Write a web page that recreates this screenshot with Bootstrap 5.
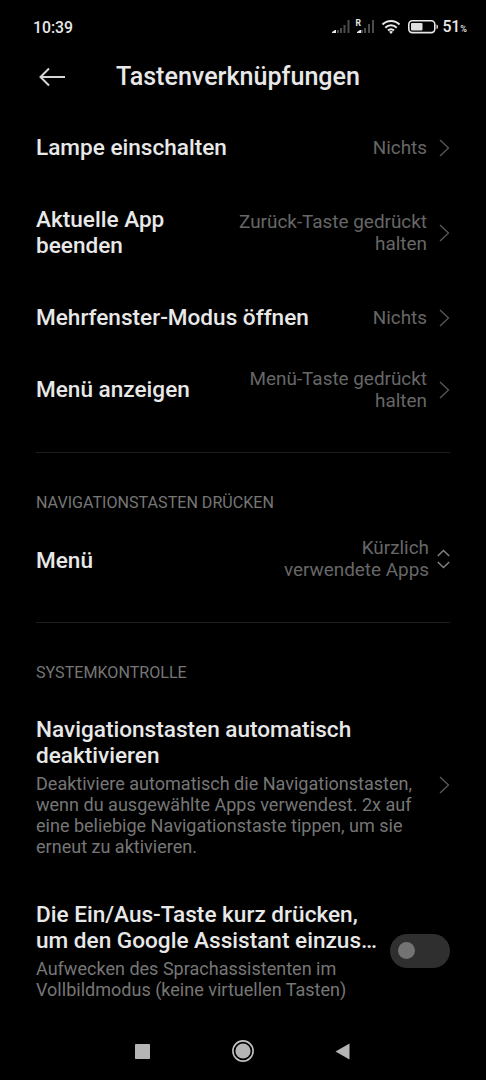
<!DOCTYPE html>
<html lang="de">
<head>
<meta charset="utf-8">
<meta name="viewport" content="width=device-width, initial-scale=1">
<title>Tastenverknüpfungen</title>
<link href="https://cdn.jsdelivr.net/npm/bootstrap@5.3.0/dist/css/bootstrap.min.css" rel="stylesheet">
<style>
  body { background: #000; color: #e8e8e8; font-family: Roboto, sans-serif; height: 1080px; overflow: hidden; }
  svg { display: block; flex: none; }
  main { min-height: 0; }
  .status-bar { height: 54px; padding: 0 20px 0 33px; font-size: 15.8px; font-weight: 500; line-height: 20px; }
  .status-text { padding-top: 2px; }
  .status-level { margin-left: 3px; margin-right: -1px; }
  .percent-sign { font-size: 9px; }
  .app-header { height: 58px; padding: 0 36px 12px 38px; }
  .app-title { font-size: 25.1px; font-weight: 500; line-height: 30px; margin-left: 50px; }
  .setting { padding: 0 36px; min-height: 72px; }
  .setting-tall { padding-top: 23px; padding-bottom: 23px; }
  .setting-last { padding-top: 22px; }
  .setting-title { font-size: 22.58px; font-weight: 500; line-height: 26px; }
  .setting-value { font-size: 18.9px; line-height: 22px; color: #676767; }
  .chevron { margin-left: 7px; margin-bottom: 1px; }
  .setting-desc { font-size: 18.05px; line-height: 21px; color: #767676; margin-top: 4px; }
  .divider { height: 1px; background: #1c1c1c; margin: 26px 36px 0; }
  .divider-wide { margin-top: 29px; }
  .section-label { font-size: 16.1px; line-height: 20px; color: #767676; padding: 40px 36px 11px; }
  .toggle { width: 60px; height: 34px; border-radius: 17px; background: #2f2f2f; padding-left: 8px; margin-bottom: 1px; }
  .toggle span { width: 17px; height: 17px; border-radius: 50%; background: #737373; }
  .nav-keys { height: 58px; padding: 0 136px 0 135px; }
</style>
</head>
<body class="d-flex flex-column">
<header>
  <div class="status-bar d-flex align-items-center justify-content-between">
    <span class="status-text">10:39</span>
    <div class="d-flex align-items-center">
      <svg width="108" height="20" viewBox="331 17 108 20">
        <g fill="#4b4b4b"><path d="M337 30h2v3h-2zM340 28h2v5h-2zM343.500 25h2v8h-2zM347.500 20h2v13h-2z"/><path d="M361 30h2v3h-2zM364 28h2v5h-2zM368 24h2v9h-2zM372 20h2v13h-2z"/></g>
        <path d="M332 33v-1l3-2h1v3zM357 33v-1l3-2h1v3z" fill="#e8e8e8"/>
        <text x="355.500" y="25.500" font-size="8.500" font-weight="700" fill="#e8e8e8">R</text>
        <g fill="none" stroke="#e8e8e8" stroke-width="2"><path d="M382.500 24.500a12 12 0 0 1 17 0M385.300 27.700a8 8 0 0 1 11.400 0M388 30.500a4.200 4.200 0 0 1 6 0"/></g>
        <path d="M391 34l-2-2.200a3 3 0 0 1 4 0z" fill="#e8e8e8"/>
        <rect x="408.800" y="20.800" width="26" height="11.800" rx="3.500" fill="none" stroke="#e8e8e8" stroke-width="1.600"/>
        <rect x="411" y="23" width="11.500" height="7.500" rx="1" fill="#e0e0e0"/>
        <path d="M436.500 24.500q1.500 0 1.500 2.200t-1.500 2.200z" fill="#e8e8e8"/>
      </svg>
      <span class="status-text status-level">51<span class="percent-sign">%</span></span>
    </div>
  </div>
  <div class="app-header d-flex align-items-center">
    <svg width="28" height="20" viewBox="0 0 28 20" fill="none" stroke="#d6d6d6" stroke-width="2"><path d="M27 10H2.500M11 1.500L2.500 10l8.500 8.500"/></svg>
    <h1 class="app-title mb-0">Tastenverknüpfungen</h1>
  </div>
</header>
<main class="flex-grow-1">
  <div class="setting d-flex align-items-center justify-content-between">
    <div class="setting-title">Lampe einschalten</div>
    <div class="d-flex align-items-center text-end"><span class="setting-value">Nichts</span><svg class="chevron" width="16" height="18" viewBox="0 0 16 18" fill="none" stroke="#585858" stroke-width="1.300"><path d="M6 1l8.500 8L6 17"/></svg></div>
  </div>
  <div class="setting setting-tall d-flex align-items-center justify-content-between">
    <div class="setting-title">Aktuelle App<br>beenden</div>
    <div class="d-flex align-items-center text-end"><span class="setting-value">Zurück-Taste gedrückt<br>halten</span><svg class="chevron" width="16" height="18" viewBox="0 0 16 18" fill="none" stroke="#585858" stroke-width="1.300"><path d="M6 1l8.500 8L6 17"/></svg></div>
  </div>
  <div class="setting d-flex align-items-center justify-content-between">
    <div class="setting-title">Mehrfenster-Modus öffnen</div>
    <div class="d-flex align-items-center text-end"><span class="setting-value">Nichts</span><svg class="chevron" width="16" height="18" viewBox="0 0 16 18" fill="none" stroke="#585858" stroke-width="1.300"><path d="M6 1l8.500 8L6 17"/></svg></div>
  </div>
  <div class="setting d-flex align-items-center justify-content-between">
    <div class="setting-title">Menü anzeigen</div>
    <div class="d-flex align-items-center text-end"><span class="setting-value">Menü-Taste gedrückt<br>halten</span><svg class="chevron" width="16" height="18" viewBox="0 0 16 18" fill="none" stroke="#585858" stroke-width="1.300"><path d="M6 1l8.500 8L6 17"/></svg></div>
  </div>
  <div class="divider"></div>
  <div class="section-label pb-2">NAVIGATIONSTASTEN DRÜCKEN</div>
  <div class="setting d-flex align-items-center justify-content-between pt-1">
    <div class="setting-title pt-1">Menü</div>
    <div class="d-flex align-items-center text-end"><span class="setting-value">Kürzlich<br>verwendete Apps</span><svg class="ms-2" width="13" height="20" viewBox="0 0 13 20" fill="none" stroke="#808080" stroke-width="1.500"><path d="M.8 7l5.700-5.500L12.200 7M.8 13l5.700 5.500 5.700-5.500"/></svg></div>
  </div>
  <div class="divider divider-wide"></div>
  <div class="section-label">SYSTEMKONTROLLE</div>
  <div class="setting setting-tall d-flex align-items-center justify-content-between">
    <div>
      <div class="setting-title text-nowrap">Navigationstasten automatisch<br>deaktivieren</div>
      <div class="setting-desc text-nowrap">Deaktiviere automatisch die Navigationstasten,<br>wenn du ausgewählte Apps verwendest. 2x auf<br>eine beliebige Navigationstaste tippen, um sie<br>erneut zu aktivieren.</div>
    </div>
    <svg class="mb-1" width="16" height="18" viewBox="0 0 16 18" fill="none" stroke="#585858" stroke-width="1.300"><path d="M6 1l8.500 8L6 17"/></svg>
  </div>
  <div class="setting setting-last d-flex align-items-center justify-content-between">
    <div>
      <div class="setting-title text-nowrap">Die Ein/Aus-Taste kurz drücken,<br>um den Google Assistant einzus…</div>
      <div class="setting-desc text-nowrap">Aufwecken des Sprachassistenten im<br>Vollbildmodus (keine virtuellen Tasten)</div>
    </div>
    <div class="toggle d-flex align-items-center flex-shrink-0" role="switch" aria-checked="false"><span></span></div>
  </div>
</main>
<nav class="nav-keys d-flex align-items-center justify-content-between flex-shrink-0">
  <svg width="15" height="15" viewBox="0 0 15 15"><rect width="15" height="15" rx=".8" fill="#b5b5b5"/></svg>
  <svg width="22" height="22" viewBox="0 0 22 22"><circle cx="11" cy="11" r="10.100" fill="none" stroke="#c2c2c2" stroke-width="1.600"/><circle cx="11" cy="11" r="7.600" fill="#b5b5b5"/></svg>
  <svg width="15" height="17" viewBox="0 0 15 17"><path d="M14.500.5v16L.5 8.500z" fill="#b5b5b5"/></svg>
</nav>
<script src="https://cdn.jsdelivr.net/npm/bootstrap@5.3.0/dist/js/bootstrap.bundle.min.js"></script>
</body>
</html>
